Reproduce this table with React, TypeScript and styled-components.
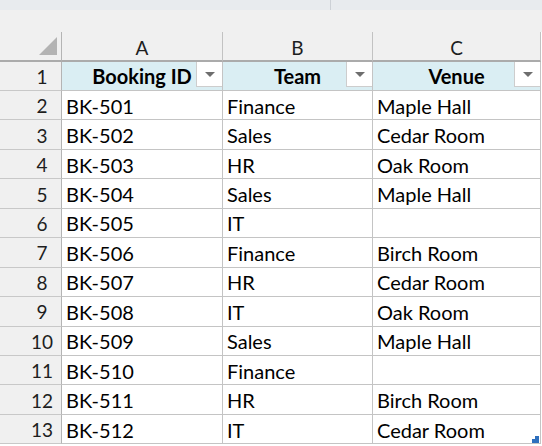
import styled, { createGlobalStyle } from "styled-components";

const GlobalStyle = createGlobalStyle`
  body {
    margin: 0;
    background: #ffffff;
    font-family: Lato, "Liberation Sans", sans-serif;
  }
`;

interface Booking {
  id: string;
  team: string;
  venue: string;
}

const bookings: Booking[] = [
  { id: "BK-501", team: "Finance", venue: "Maple Hall" },
  { id: "BK-502", team: "Sales", venue: "Cedar Room" },
  { id: "BK-503", team: "HR", venue: "Oak Room" },
  { id: "BK-504", team: "Sales", venue: "Maple Hall" },
  { id: "BK-505", team: "IT", venue: "" },
  { id: "BK-506", team: "Finance", venue: "Birch Room" },
  { id: "BK-507", team: "HR", venue: "Cedar Room" },
  { id: "BK-508", team: "IT", venue: "Oak Room" },
  { id: "BK-509", team: "Sales", venue: "Maple Hall" },
  { id: "BK-510", team: "Finance", venue: "" },
  { id: "BK-511", team: "HR", venue: "Birch Room" },
  { id: "BK-512", team: "IT", venue: "Cedar Room" },
];

const columns = ["A", "B", "C"];
const headers = ["Booking ID", "Team", "Venue"];

const Page = styled.div`
  width: 542px;
  height: 446px;
  overflow: hidden;
  background: #ffffff;
`;

const TopBar = styled.div`
  height: 10px;
  display: flex;
  background: #e8ebee;
`;

const TopBarPane = styled.div`
  width: 330px;
  border-right: 1px solid #cdd1d6;
`;

const Gap = styled.div`
  height: 22px;
  background: #f0f0f0;
`;

const Sheet = styled.div`
  display: grid;
  grid-template-columns: 62px 161px 150px 168px;
  grid-template-rows: 30px 29px repeat(12, 29.44px);
  background: #f0f0f0;
  width: 541px;
`;

const Corner = styled.div`
  box-sizing: border-box;
  background: #f0f0f0;
  border-right: 1px solid #b4b4b4;
  border-bottom: 2px solid #ababab;
  display: flex;
  justify-content: flex-end;
  align-items: flex-end;
  padding: 0 4px 5px 0;
`;

const ColHead = styled.div`
  box-sizing: border-box;
  background: #f0f0f0;
  border-right: 1px solid #c2c2c2;
  border-bottom: 2px solid #ababab;
  display: flex;
  align-items: center;
  justify-content: center;
  padding-top: 2px;
  font-size: 19px;
  color: #1e1e1e;
`;

const RowHead = styled.div`
  box-sizing: border-box;
  background: #f0f0f0;
  border-right: 1px solid #b4b4b4;
  border-bottom: 1px solid #c8c8c8;
  display: flex;
  align-items: center;
  justify-content: center;
  padding: 1px 0 0 23px;
  font-size: 19px;
  color: #1e1e1e;
`;

const HeaderCell = styled.div`
  position: relative;
  box-sizing: border-box;
  background: #daeef3;
  border-right: 1px solid #c4c4c4;
  border-bottom: 1px solid #c4c4c4;
  display: flex;
  align-items: center;
  justify-content: center;
  font-size: 20px;
  font-weight: 700;
  color: #000000;
`;

const FilterButton = styled.div`
  position: absolute;
  top: 0;
  right: 0;
  box-sizing: border-box;
  width: 26px;
  height: 25px;
  background: #ffffff;
  border-left: 1px solid #cdcdcd;
  border-bottom: 1px solid #cdcdcd;
  display: flex;
  align-items: center;
  justify-content: center;
`;

const Cell = styled.div`
  position: relative;
  box-sizing: border-box;
  background: #ffffff;
  border-right: 1px solid #c4c4c4;
  border-bottom: 1px solid #c4c4c4;
  display: flex;
  align-items: center;
  padding: 1px 0 0 4px;
  font-size: 20px;
  color: #000000;
  white-space: nowrap;
`;

const ResizeHandle = styled.svg`
  position: absolute;
  right: 1px;
  bottom: 0;
`;

const SelectAll = () => (
  <svg width="18" height="18" viewBox="0 0 18 18">
    <polygon points="0,18 18,18 18,0" fill="#b3b3b3" />
  </svg>
);

const DropArrow = () => (
  <svg width="10" height="5" viewBox="0 0 10 5">
    <polygon points="0,0 10,0 5,5" fill="#6e6e6e" />
  </svg>
);

export default function App() {
  return (
    <Page>
      <GlobalStyle />
      <TopBar>
        <TopBarPane />
      </TopBar>
      <Gap />
      <Sheet>
        <Corner>
          <SelectAll />
        </Corner>
        {columns.map((c) => (
          <ColHead key={c}>{c}</ColHead>
        ))}
        <RowHead>1</RowHead>
        {headers.map((h) => (
          <HeaderCell key={h}>
            {h}
            <FilterButton>
              <DropArrow />
            </FilterButton>
          </HeaderCell>
        ))}
        {bookings.map((b, i) => (
          <Row key={b.id} booking={b} num={i + 2} last={i === bookings.length - 1} />
        ))}
      </Sheet>
    </Page>
  );
}

function Row({ booking, num, last }: { booking: Booking; num: number; last: boolean }) {
  return (
    <>
      <RowHead>{num}</RowHead>
      <Cell>{booking.id}</Cell>
      <Cell>{booking.team}</Cell>
      <Cell>
        {booking.venue}
        {last && (
          <ResizeHandle width="7" height="7" viewBox="0 0 7 7">
            <path d="M3 0H7V7H0V3H3Z" fill="#2e6fbd" />
          </ResizeHandle>
        )}
      </Cell>
    </>
  );
}
